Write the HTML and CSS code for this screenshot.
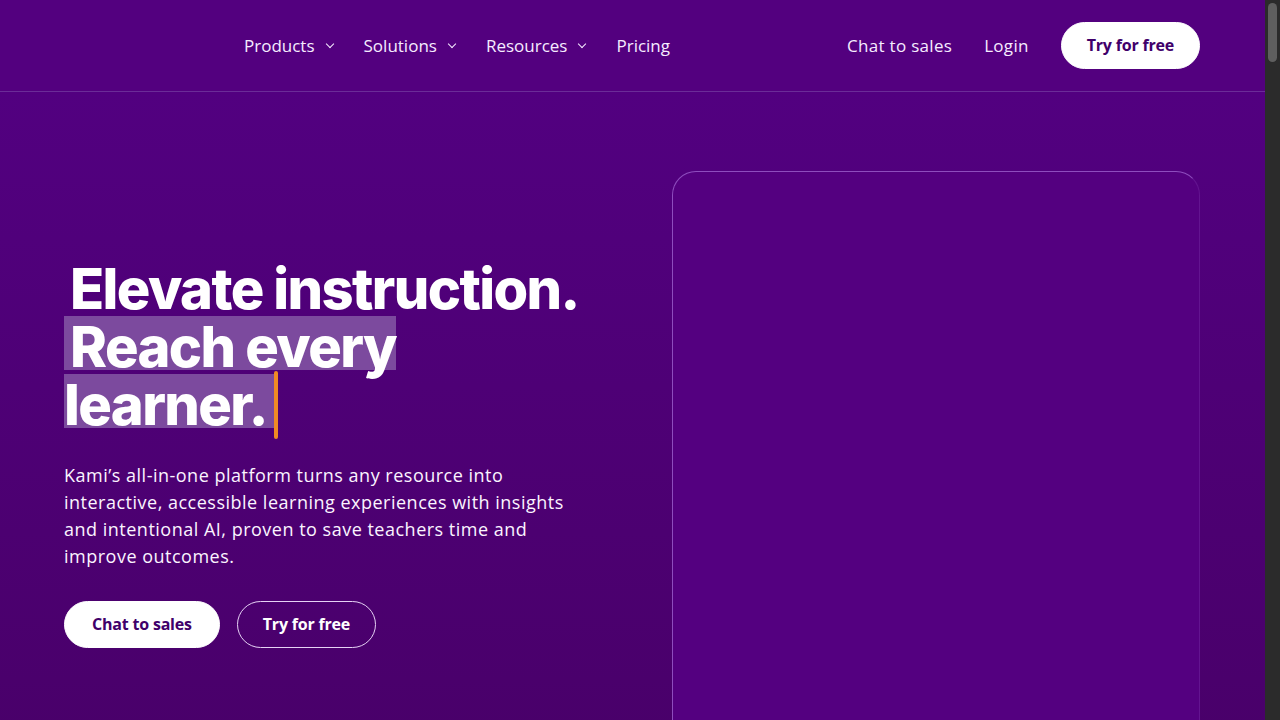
FILE: index.html
```html
<!DOCTYPE html>
<html>
  <head>
    <meta charset="utf-8">
    <title>Kami - Elevate instruction</title>
    <link rel="stylesheet" href="styles.css">
</head>
<body>
  <header class="topbar">
    <div class="logo"></div>
    <nav class="menu">
      <a href="#" class="menu-item">Products <span class="chev"></span></a>
      <a href="#" class="menu-item">Solutions <span class="chev"></span></a>
      <a href="#" class="menu-item">Resources <span class="chev"></span></a>
      <a href="#" class="menu-item">Pricing</a>
    </nav>
    <div class="actions">
      <a href="#" class="menu-item">Chat to sales</a>
      <a href="#" class="menu-item">Login</a>
      <a href="#" class="btn btn-solid">Try for free</a>
    </div>
  </header>

  <main class="hero">
    <div class="hero-text">
      <h1 class="title">Elevate instruction.<br><span class="mark">Reach every<br>learner.</span><span class="caret"></span></h1>
      <p class="intro">Kami’s all-in-one platform turns any resource into interactive, accessible learning experiences with insights and intentional AI, proven to save teachers time and improve outcomes.</p>
      <div class="buttons">
        <a href="#" class="btn btn-solid">Chat to sales</a>
        <a href="#" class="btn btn-line">Try for free</a>
      </div>
    </div>
    <div class="hero-card"></div>
  </main>

  <div class="scrollbar"><div class="thumb"></div></div>
</body>
</html>
```

FILE: styles.css
```css
body {
  margin: 0 15px 0 0;
  font-family: "Open Sans", Arial, sans-serif;
  background: #45005f;
  color: #fff;
}

a {
  color: inherit;
  text-decoration: none;
}

.topbar {
  display: flex;
  align-items: center;
  height: 91px;
  padding: 0 65px 0 64px;
  background: #53007f;
  border-bottom: 1px solid #6b2c98;
}

.logo {
  width: 180px;
}

.menu {
  display: flex;
  gap: 31px;
  flex: 1;
}

.menu-item {
  font-size: 17px;
  color: #f6ecff;
  display: flex;
  align-items: center;
  gap: 10px;
}

.actions .menu-item {
  letter-spacing: 0.3px;
}

.chev {
  width: 5px;
  height: 5px;
  border-right: 1.6px solid #f6ecff;
  border-bottom: 1.6px solid #f6ecff;
  transform: rotate(45deg);
  margin-top: -4px;
  margin-left: 2px;
}

.actions {
  display: flex;
  align-items: center;
  gap: 32px;
}

.btn {
  display: inline-block;
  height: 47px;
  line-height: 45px;
  padding: 0 25px;
  border-radius: 24px;
  font-weight: 700;
  font-size: 16px;
  letter-spacing: -0.2px;
  box-sizing: border-box;
  border: 1px solid #fff;
}

.btn-solid {
  background: #fff;
  color: #40006a;
}

.btn-line {
  color: #fff;
  border-color: #e6d2f5;
}

.buttons .btn-solid {
  padding: 0 27px;
}

.hero {
  display: flex;
  justify-content: space-between;
  padding: 79px 65px 0 64px;
  background: linear-gradient(180deg, #520080 0%, #4a006c 60%, #42005d 100%);
  height: 900px;
}

.hero-text {
  width: 530px;
  padding-top: 89px;
}

.title {
  font-family: Inter, "Liberation Sans", sans-serif;
  font-weight: 800;
  font-size: 56px;
  line-height: 58px;
  letter-spacing: -1.6px;
  margin: 0;
  text-indent: 6px;
}

.mark {
  padding: 0 7px 0 6px;
  background-image: linear-gradient(#7c4a9e, #7c4a9e);
  background-size: 100% 54px;
  background-position: 0 3px;
  background-repeat: repeat-x;
}

.caret {
  display: inline-block;
  width: 4px;
  height: 68px;
  margin: -8px 0;
  background: #f08a24;
  border-radius: 2px;
  vertical-align: -6px;
}

.intro {
  font-size: 18px;
  line-height: 27px;
  letter-spacing: 0.5px;
  margin: 28px 0 0;
  color: #fbf4ff;
  width: 520px;
}

.buttons {
  display: flex;
  gap: 17px;
  margin-top: 31px;
}

.hero-card {
  width: 528px;
  height: 700px;
  box-sizing: border-box;
  border-radius: 24px;
  background: #540080;
  border: 1px solid rgba(190, 140, 240, 0.55);
  border-right-color: rgba(190, 140, 240, 0.15);
  border-bottom: none;
}

.scrollbar {
  position: fixed;
  top: 0;
  right: 0;
  width: 15px;
  height: 100vh;
  background: #2b2b2b;
}

.thumb {
  width: 9px;
  height: 59px;
  margin: 3px 0 0 3px;
  border-radius: 5px;
  background: #5f5f5f;
}
```
